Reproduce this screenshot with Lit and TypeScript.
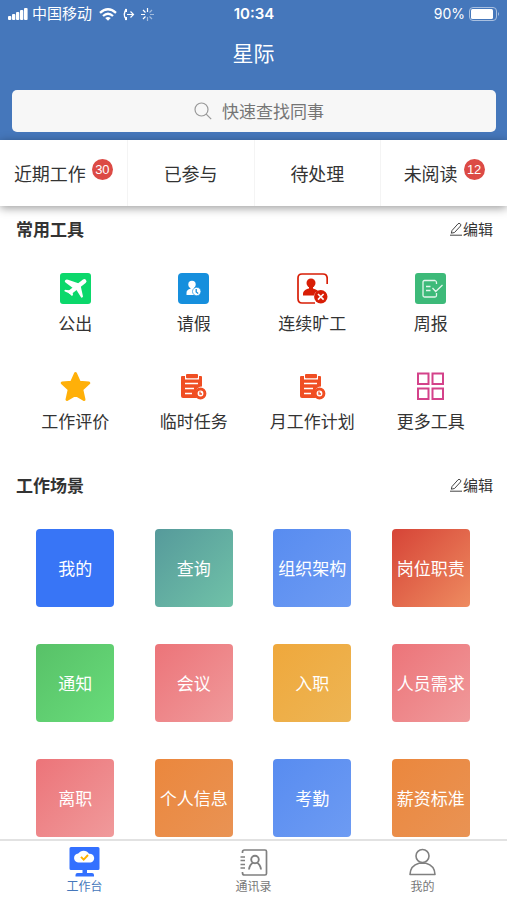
import { LitElement, html, css, svg } from "lit";
import { customElement, property } from "lit/decorators.js";
import { classMap } from "lit/directives/class-map.js";

const clipboard = svg`
  <path fill="#f04e23" d="M4 5h3v3.500h14V5h2q1 0 1 1v9.500a7 7 0 0 0-5 11.500H5q-2 0-2-2V6q0-1 1-1z"/>
  <rect x="8" y="3" width="12" height="4.300" rx="1" fill="#f04e23"/>
  <path d="M7 12.500h13M7 17.500h9M7 22.500h7" stroke="#fff" stroke-width="1.700" fill="none"/>
  <circle cx="22.500" cy="22.500" r="4.400" fill="#fff" stroke="#f04e23" stroke-width="3"/>
  <path d="M22 20.500v2.500h2" stroke="#f04e23" stroke-width="1.300" fill="none"/>`;

const icons: Record<string, unknown> = {
  plane: svg`<rect width="31" height="31" rx="3" fill="#0bd86b"/>
    <path d="M24.300 8.300 10.500 19" stroke="#fff" stroke-width="4.300" stroke-linecap="round"/>
    <path fill="#fff" d="M5 7.500Q6.500 6 8 6.800L19 10.500 13.500 15.500 5.500 9.500Q4.300 8.500 5 7.500zM20.500 12 23 23.500Q22.500 25 21.200 24.500L15.500 15.500zM4.500 17.300Q5.200 16.500 6.500 17L12 17.500 13 21.500Q13 23 11.500 22.800L9.500 20.500 5 18.500Q4 18 4.500 17.300z"/>`,
  leave: svg`<rect width="31" height="31" rx="4" fill="#168fdd"/>
    <circle cx="14" cy="11.500" r="3.700" fill="#fff"/>
    <path fill="#fff" d="M12.500 14h3.200l1.500 3-1 5H8.500v-2c0-2.500 1.500-3.500 4-4.200z"/>
    <circle cx="18.700" cy="18.500" r="4.200" fill="#fff" stroke="#168fdd" stroke-width=".7"/>
    <path d="M18.200 16v3l2 1.500" fill="none" stroke="#168fdd" stroke-width="1.300"/>`,
  absent: svg`<path d="M30.200 11V5.500Q30.200 1 26 1H5Q1 1 1 5v20.500Q1 30 5 30h13" fill="none" stroke="#d81e06" stroke-width="1.700"/>
    <circle cx="14" cy="10" r="4.500" fill="#d81e06"/>
    <path fill="#d81e06" d="M12 13h4v2.500c3 .8 5 2.200 5.500 3-2.500 0-4 1.500-4.300 4H6v-1.500c0-3 2.500-4.800 6-5.500z"/>
    <circle cx="23.800" cy="23.800" r="6.700" fill="#d81e06"/>
    <path d="m21 21 5.600 5.600m0-5.600-5.600 5.600" stroke="#fff" stroke-width="1.600"/>`,
  report: svg`<rect width="31" height="31" rx="3" fill="#3dba79"/>
    <path d="M21.500 11V9.500Q21.500 8 20 7.500H9.500Q8 7.500 8 9v13.500Q8 24 9.500 24H20q1.500 0 1.500-1.500V20M11 13.500h4.500M11 17.500h4.500m2-2.500 3.200 3.500L27.500 12" fill="none" stroke="#fff" stroke-opacity=".85" stroke-width="1.300"/>`,
  star: svg`<path d="M15.500 2.500 19.300 11.200 28.800 12 21.800 18.500 24 28.500 15.500 23.500 7 28.500 9.200 18.500 2.200 12 11.700 11.200Z" fill="#ffb009" stroke="#ffb009" stroke-width="3" stroke-linejoin="round"/>`,
  task: clipboard,
  more: svg`<path d="M3 2.500h10.500V13H3zM17.500 2.500H28V13H17.500zM3 17.500h10.500V28H3zM17.500 17.500H28V28H17.500z" fill="none" stroke="#d4428a" stroke-width="2"/>`,
  desk: svg`<path fill="#3370ff" d="M2 0h27q1.500 0 1.500 1.500v20q0 1.500-1.500 1.500H18v3h5q2 0 2 2v1.500H6.500V28q0-2 2-2h5v-3H2Q.5 23 .5 21.500v-20Q.5 0 2 0z"/>
    <path fill="#fff" d="M10 15.500a4.500 4.500 0 0 1-.8-9 6.500 6.500 0 0 1 10.800.3 4.400 4.400 0 0 1 1.500 8.700z"/>
    <path d="m12 9.800 2.700 2.900 4.300-4.700" fill="none" stroke="#ffb300" stroke-width="1.900"/>`,
  book: svg`<path d="M4.500 6V5q0-2 2-2H27q1.500 0 1.500 1.500v22Q28.500 28 27 28H6.500q-2 0-2-2v-1M2.500 10h4.500M2.500 13.500h4.500M2.500 17.500h4.500M2.500 21h4.500" fill="none" stroke="#808080" stroke-width="1.700"/>
    <circle cx="17" cy="12.500" r="3.800" fill="none" stroke="#808080" stroke-width="1.900"/>
    <path d="M15.500 15.500q-4 2-4.500 7M18.500 15.500q4 2 4.500 7" fill="none" stroke="#808080" stroke-width="1.900"/>`,
  me: svg`<circle cx="15.500" cy="9" r="6.500" fill="none" stroke="#808080" stroke-width="1.600"/>
    <path d="M3 27.500q.3-9 9-11.300h7q8.700 2.300 9 11.300z" fill="none" stroke="#808080" stroke-width="1.600" stroke-linejoin="round"/>`,
};

@customElement("app-icon")
class AppIcon extends LitElement {
  @property() name = "";
  static styles = css`
    :host { display: block; width: 31px; height: 31px; }
    svg { display: block; width: 100%; height: 100%; }
  `;
  render() {
    return html`<svg viewBox="0 0 31 31" aria-hidden="true">${icons[this.name]}</svg>`;
  }
}

@customElement("section-head")
class SectionHead extends LitElement {
  @property() label = "";
  static styles = css`
    :host { display: flex; justify-content: space-between; align-items: center; padding: 0 14px 0 16px; height: 30px; }
    h2 { margin: 0; font-size: 17px; line-height: 24px; font-weight: 700; color: #333; }
    button { display: flex; align-items: center; padding: 0; border: 0; background: none; font: inherit; font-size: 15px; line-height: 20px; color: #333; }
    svg { display: block; }
  `;
  render() {
    return html`<h2>${this.label}</h2>
      <button type="button">
        <svg width="14" height="14" viewBox="0 0 14 14" fill="none" stroke="#444" aria-hidden="true">
          <path d="M1 13.200h12M3 8.500 9 1.800q1-1 2.200 0t.3 2.200L5.500 10.500 2.300 11.200z" />
        </svg>编辑
      </button>`;
  }
}

const tabs = [
  { label: "近期工作", count: 30 },
  { label: "已参与", count: 0 },
  { label: "待处理", count: 0 },
  { label: "未阅读", count: 12 },
];

const tools = [
  ["plane", "公出"],
  ["leave", "请假"],
  ["absent", "连续旷工"],
  ["report", "周报"],
  ["star", "工作评价"],
  ["task", "临时任务"],
  ["task", "月工作计划"],
  ["more", "更多工具"],
];

const scenes = [
  ["royal", "我的"],
  ["teal", "查询"],
  ["blue", "组织架构"],
  ["red", "岗位职责"],
  ["green", "通知"],
  ["pink", "会议"],
  ["amber", "入职"],
  ["pink", "人员需求"],
  ["pink", "离职"],
  ["orange", "个人信息"],
  ["blue", "考勤"],
  ["orange", "薪资标准"],
];

const navItems = [
  ["desk", "工作台"],
  ["book", "通讯录"],
  ["me", "我的"],
];

@customElement("app-root")
class AppRoot extends LitElement {
  static styles = css`
    :host {
      display: flex; flex-direction: column; min-height: 100vh; background: #fff; color: #333;
      font-family: "Noto Sans CJK SC", sans-serif;
    }
    button { font-family: inherit; border: 0; padding: 0; background: none; color: inherit; }
    .top { background: #4577bb; color: #fff; padding-bottom: 8px; }
    .status {
      display: grid; grid-template-columns: 1fr auto 1fr; align-items: center; height: 28px; padding: 0 7px 0 8px;
      font-family: Inter, "Noto Sans CJK SC", sans-serif; font-size: 14px; line-height: 20px;
    }
    .status svg { display: block; }
    .left, .right { display: flex; align-items: center; gap: 4px; }
    .carrier { margin-right: 3px; font-size: 15px; }
    .right { justify-content: flex-end; }
    .time { font-size: 15px; font-weight: 600; }
    h1 { margin: 0; font-size: 21px; line-height: 28px; font-weight: 400; text-align: center; padding: 10px 0 24px; }
    .search {
      display: flex; align-items: center; justify-content: center; gap: 10px; height: 42px; margin: 0 11px 0 12px;
      border-radius: 5px; background: #f7f7f7; padding-left: 12px;
    }
    .search input {
      width: 104px; height: 24px; border: 0; padding: 0; outline: 0; background: none; font: inherit; font-size: 17px; line-height: 24px; color: #333;
    }
    .search input::placeholder { color: #757575; opacity: 1; }
    .tabs { position: relative; display: grid; grid-template-columns: repeat(4, 1fr); background: #fff; box-shadow: 0 2px 9px rgba(0, 0, 0, 0.4); }
    .tab { display: flex; justify-content: center; align-items: center; gap: 6px; height: 66px; font-size: 18px; line-height: 26px; }
    .tab + .tab { border-left: 1px solid #f4f4f4; }
    .badge { align-self: flex-start; margin-top: 19px; width: 21px; height: 21px; border-radius: 50%; background: #dc4a45; color: #fff; font-family: "Liberation Sans", sans-serif; font-size: 13px; line-height: 22px; text-align: center; }
    main { flex: 1; padding-top: 8px; }
    .grid { display: grid; grid-template-columns: repeat(4, 1fr); justify-items: center; padding: 0 17px 0 16px; }
    .tools { row-gap: 36px; padding-top: 29px; padding-bottom: 37px; }
    .tool { display: flex; flex-direction: column; align-items: center; gap: 7px; font-size: 17px; line-height: 24px; white-space: nowrap; }
    .scenes { row-gap: 37px; padding-top: 29px; padding-bottom: 2px; }
    .tile { width: 78px; height: 78px; border-radius: 4px; color: #fff; font-size: 17px; line-height: 24px; white-space: nowrap; }
    .royal { background: #3875f6; }
    .teal { background: linear-gradient(135deg, #569a9b, #70c2a8); }
    .blue { background: linear-gradient(135deg, #588cf0, #6d9bf3); }
    .red { background: linear-gradient(135deg, #d64437, #ee8b60); }
    .green { background: linear-gradient(135deg, #58c168, #68dc7a); }
    .pink { background: linear-gradient(135deg, #ec7479, #f09a9b); }
    .amber { background: linear-gradient(135deg, #efa83c, #edb554); }
    .orange { background: linear-gradient(135deg, #eb873d, #e99354); }
    nav { display: grid; grid-template-columns: repeat(3, 1fr); border-top: 2px solid #e2e2e2; background: #fff; }
    nav a { display: flex; flex-direction: column; align-items: center; padding: 6px 0 7px; color: #777; font-size: 12px; line-height: 16px; text-decoration: none; }
    nav a.active { color: #4577bb; }
  `;

  render() {
    return html`
      <header class="top">
        <div class="status">
          <div class="left">
            <svg width="20" height="12" viewBox="0 0 20 12" fill="#fff" aria-hidden="true">
              <rect y="8" width="3.300" height="4" rx="1" /><rect x="4" y="6" width="3.300" height="6" rx="1" />
              <rect x="8" y="4" width="3.300" height="8" rx="1" /><rect x="12" y="2" width="3.300" height="10" rx="1" />
              <rect x="16" width="3.600" height="12" rx="1" />
            </svg>
            <span class="carrier">中国移动</span>
            <svg width="18" height="13" viewBox="0 0 18 13" fill="none" stroke="#fff" stroke-width="2.300" aria-hidden="true">
              <path d="M1 4.800q8-7.200 16 0M4 8q5-4.400 10 0" /><path d="M6.200 10q2.800-2.200 5.600 0L9 12.800z" fill="#fff" stroke="none" />
            </svg>
            <svg width="16" height="13" viewBox="0 0 16 13" fill="none" stroke="#fff" aria-hidden="true">
              <path d="M5.500 1Q1 6.500 5.500 12" stroke-width="1.500" /><path d="M5 1v3M5 9v3" stroke-width="2" />
              <path d="M6 6.500h6.500M9.500 3.500l3 3-3 3" stroke-width="1.200" />
            </svg>
            <svg width="13" height="13" viewBox="0 0 13 13" stroke="#fff" stroke-width="1.200" aria-hidden="true">
              <path d="M6.500 0v4M2 2l2.500 2.500M0 6.500h4M2 11l2.500-2.500" />
              <path d="M6.500 9v4M8.500 8.500 11 11M9 6.500h4M8.500 4.500 11 2" opacity=".5" />
            </svg>
          </div>
          <span class="time">10:34</span>
          <div class="right">
            <span>90%</span>
            <svg width="31" height="14" viewBox="0 0 31 14" aria-hidden="true">
              <rect x=".5" y=".5" width="27" height="13" rx="3.500" fill="none" stroke="#a9c0e0" />
              <rect x="2" y="2" width="22" height="10" rx="1.500" fill="#fff" />
              <path d="M29 5q2 2 0 4z" fill="#a9c0e0" />
            </svg>
          </div>
        </div>
        <h1>星际</h1>
        <label class="search">
          <svg width="18" height="18" viewBox="0 0 18 18" fill="none" stroke="#999" stroke-width="1.200" aria-hidden="true">
            <circle cx="7.500" cy="7.500" r="6.500" /><path d="m12.200 12.200 5 5" />
          </svg>
          <input type="text" placeholder="快速查找同事" aria-label="快速查找同事" />
        </label>
      </header>
      <div class="tabs">
        ${tabs.map((t) => html`<button class="tab" type="button">${t.label}${t.count ? html`<span class="badge">${t.count}</span>` : null}</button>`)}
      </div>
      <main>
        <section>
          <section-head label="常用工具"></section-head>
          <div class="grid tools">
            ${tools.map(([icon, label]) => html`<button class="tool" type="button"><app-icon name=${icon}></app-icon>${label}</button>`)}
          </div>
        </section>
        <section>
          <section-head label="工作场景"></section-head>
          <div class="grid scenes">
            ${scenes.map(([tone, label]) => html`<button type="button" class=${classMap({ tile: true, [tone]: true })}>${label}</button>`)}
          </div>
        </section>
      </main>
      <nav>
        ${navItems.map(([icon, label], i) => html`<a href="#" class=${classMap({ active: i === 0 })}><app-icon name=${icon}></app-icon>${label}</a>`)}
      </nav>
    `;
  }
}
